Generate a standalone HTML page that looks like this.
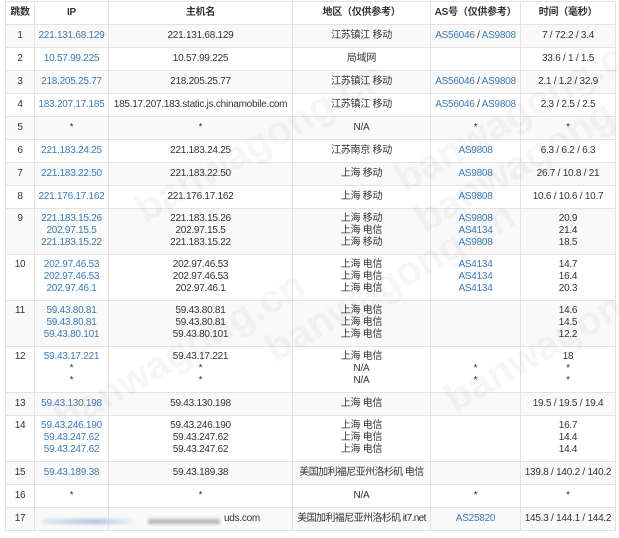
<!DOCTYPE html>
<html><head><meta charset="utf-8"><style>
body{margin:0;background:#fff;width:619px;height:538px;overflow:hidden;position:relative;font-family:"Liberation Sans","Noto Sans CJK SC",sans-serif;font-size:10px;letter-spacing:-0.25px;color:#333}
table{position:absolute;left:5px;top:1px;border-collapse:collapse;table-layout:fixed;width:610px}
td,th{border:1px solid #e3e3e3;padding:0;text-align:center;line-height:12px;vertical-align:middle;white-space:nowrap;overflow:hidden}
th{font-weight:bold;height:22px;background:#fff}
tr.s td{height:22px}
tr.m td{height:46px;vertical-align:top;padding-top:4px;box-sizing:border-box}
tbody tr:nth-child(odd) td{background:#f9f9f9}
a{color:#3b7ab7;text-decoration:none}
.wm{position:absolute;color:rgba(0,0,0,0.035);font-size:40px;font-weight:bold;transform:rotate(-30deg);white-space:nowrap;pointer-events:none;font-family:"Liberation Sans",sans-serif;letter-spacing:0}
.blur{position:absolute;height:5px;filter:blur(1.5px)}
</style></head><body>
<table>
<colgroup><col style="width:29px"><col style="width:74px"><col style="width:184px"><col style="width:138px"><col style="width:90px"><col style="width:95px"></colgroup>
<thead><tr><th>跳数</th><th>IP</th><th>主机名</th><th>地区（仅供参考）</th><th>AS号（仅供参考）</th><th>时间（毫秒）</th></tr></thead>
<tbody>
<tr class="s"><td>1</td><td><a>221.131.68.129</a></td><td>221.131.68.129</td><td>江苏镇江 移动</td><td><a>AS56046</a> / <a>AS9808</a></td><td>7 / 72.2 / 3.4</td></tr>
<tr class="s"><td>2</td><td><a>10.57.99.225</a></td><td>10.57.99.225</td><td>局域网</td><td></td><td>33.6 / 1 / 1.5</td></tr>
<tr class="s"><td>3</td><td><a>218.205.25.77</a></td><td>218.205.25.77</td><td>江苏镇江 移动</td><td><a>AS56046</a> / <a>AS9808</a></td><td>2.1 / 1.2 / 32.9</td></tr>
<tr class="s"><td>4</td><td><a>183.207.17.185</a></td><td>185.17.207.183.static.js.chinamobile.com</td><td>江苏镇江 移动</td><td><a>AS56046</a> / <a>AS9808</a></td><td>2.3 / 2.5 / 2.5</td></tr>
<tr class="s"><td>5</td><td>*</td><td>*</td><td>N/A</td><td>*</td><td>*</td></tr>
<tr class="s"><td>6</td><td><a>221.183.24.25</a></td><td>221.183.24.25</td><td>江苏南京 移动</td><td><a>AS9808</a></td><td>6.3 / 6.2 / 6.3</td></tr>
<tr class="s"><td>7</td><td><a>221.183.22.50</a></td><td>221.183.22.50</td><td>上海 移动</td><td><a>AS9808</a></td><td>26.7 / 10.8 / 21</td></tr>
<tr class="s"><td>8</td><td><a>221.176.17.162</a></td><td>221.176.17.162</td><td>上海 移动</td><td><a>AS9808</a></td><td>10.6 / 10.6 / 10.7</td></tr>
<tr class="m"><td>9</td><td><a>221.183.15.26<br>202.97.15.5<br>221.183.15.22</a></td><td>221.183.15.26<br>202.97.15.5<br>221.183.15.22</td><td>上海 移动<br>上海 电信<br>上海 移动</td><td><a>AS9808<br>AS4134<br>AS9808</a></td><td>20.9<br>21.4<br>18.5</td></tr>
<tr class="m"><td>10</td><td><a>202.97.46.53<br>202.97.46.53<br>202.97.46.1</a></td><td>202.97.46.53<br>202.97.46.53<br>202.97.46.1</td><td>上海 电信<br>上海 电信<br>上海 电信</td><td><a>AS4134<br>AS4134<br>AS4134</a></td><td>14.7<br>16.4<br>20.3</td></tr>
<tr class="m"><td>11</td><td><a>59.43.80.81<br>59.43.80.81<br>59.43.80.101</a></td><td>59.43.80.81<br>59.43.80.81<br>59.43.80.101</td><td>上海 电信<br>上海 电信<br>上海 电信</td><td></td><td>14.6<br>14.5<br>12.2</td></tr>
<tr class="m"><td>12</td><td><a>59.43.17.221</a><br>*<br>*</td><td>59.43.17.221<br>*<br>*</td><td>上海 电信<br>N/A<br>N/A</td><td><br>*<br>*</td><td>18<br>*<br>*</td></tr>
<tr class="s"><td>13</td><td><a>59.43.130.198</a></td><td>59.43.130.198</td><td>上海 电信</td><td></td><td>19.5 / 19.5 / 19.4</td></tr>
<tr class="m"><td>14</td><td><a>59.43.246.190<br>59.43.247.62<br>59.43.247.62</a></td><td>59.43.246.190<br>59.43.247.62<br>59.43.247.62</td><td>上海 电信<br>上海 电信<br>上海 电信</td><td></td><td>16.7<br>14.4<br>14.4</td></tr>
<tr class="s"><td>15</td><td><a>59.43.189.38</a></td><td>59.43.189.38</td><td style="letter-spacing:-0.6px">美国加利福尼亚州洛杉矶 电信</td><td></td><td>139.8 / 140.2 / 140.2</td></tr>
<tr class="s"><td>16</td><td>*</td><td>*</td><td>N/A</td><td>*</td><td>*</td></tr>
<tr class="s"><td>17</td><td></td><td style="text-align:right;padding-right:32px">uds.com</td><td style="letter-spacing:-0.6px">美国加利福尼亚州洛杉矶 it7.net</td><td><a>AS25820</a></td><td>145.3 / 144.1 / 144.2</td></tr>
</tbody></table>
<div class="blur" style="left:42px;top:519px;width:90px;background:linear-gradient(90deg,#dfe6f0,#a9c0de 60%,#e8eef6)"></div>
<div class="blur" style="left:148px;top:519px;width:72px;background:#b5b5b5"></div>
<div class="wm" style="left:120px;top:120px">banwagong.cn</div>
<div class="wm" style="left:380px;top:90px">banwagong.cn</div>
<div class="wm" style="left:40px;top:330px">banwagong.cn</div>
<div class="wm" style="left:250px;top:260px">banwagong.cn</div>
<div class="wm" style="left:430px;top:310px">banwagong.cn</div>
<div class="wm" style="left:400px;top:130px">banwagong.cn</div>
</body></html>
